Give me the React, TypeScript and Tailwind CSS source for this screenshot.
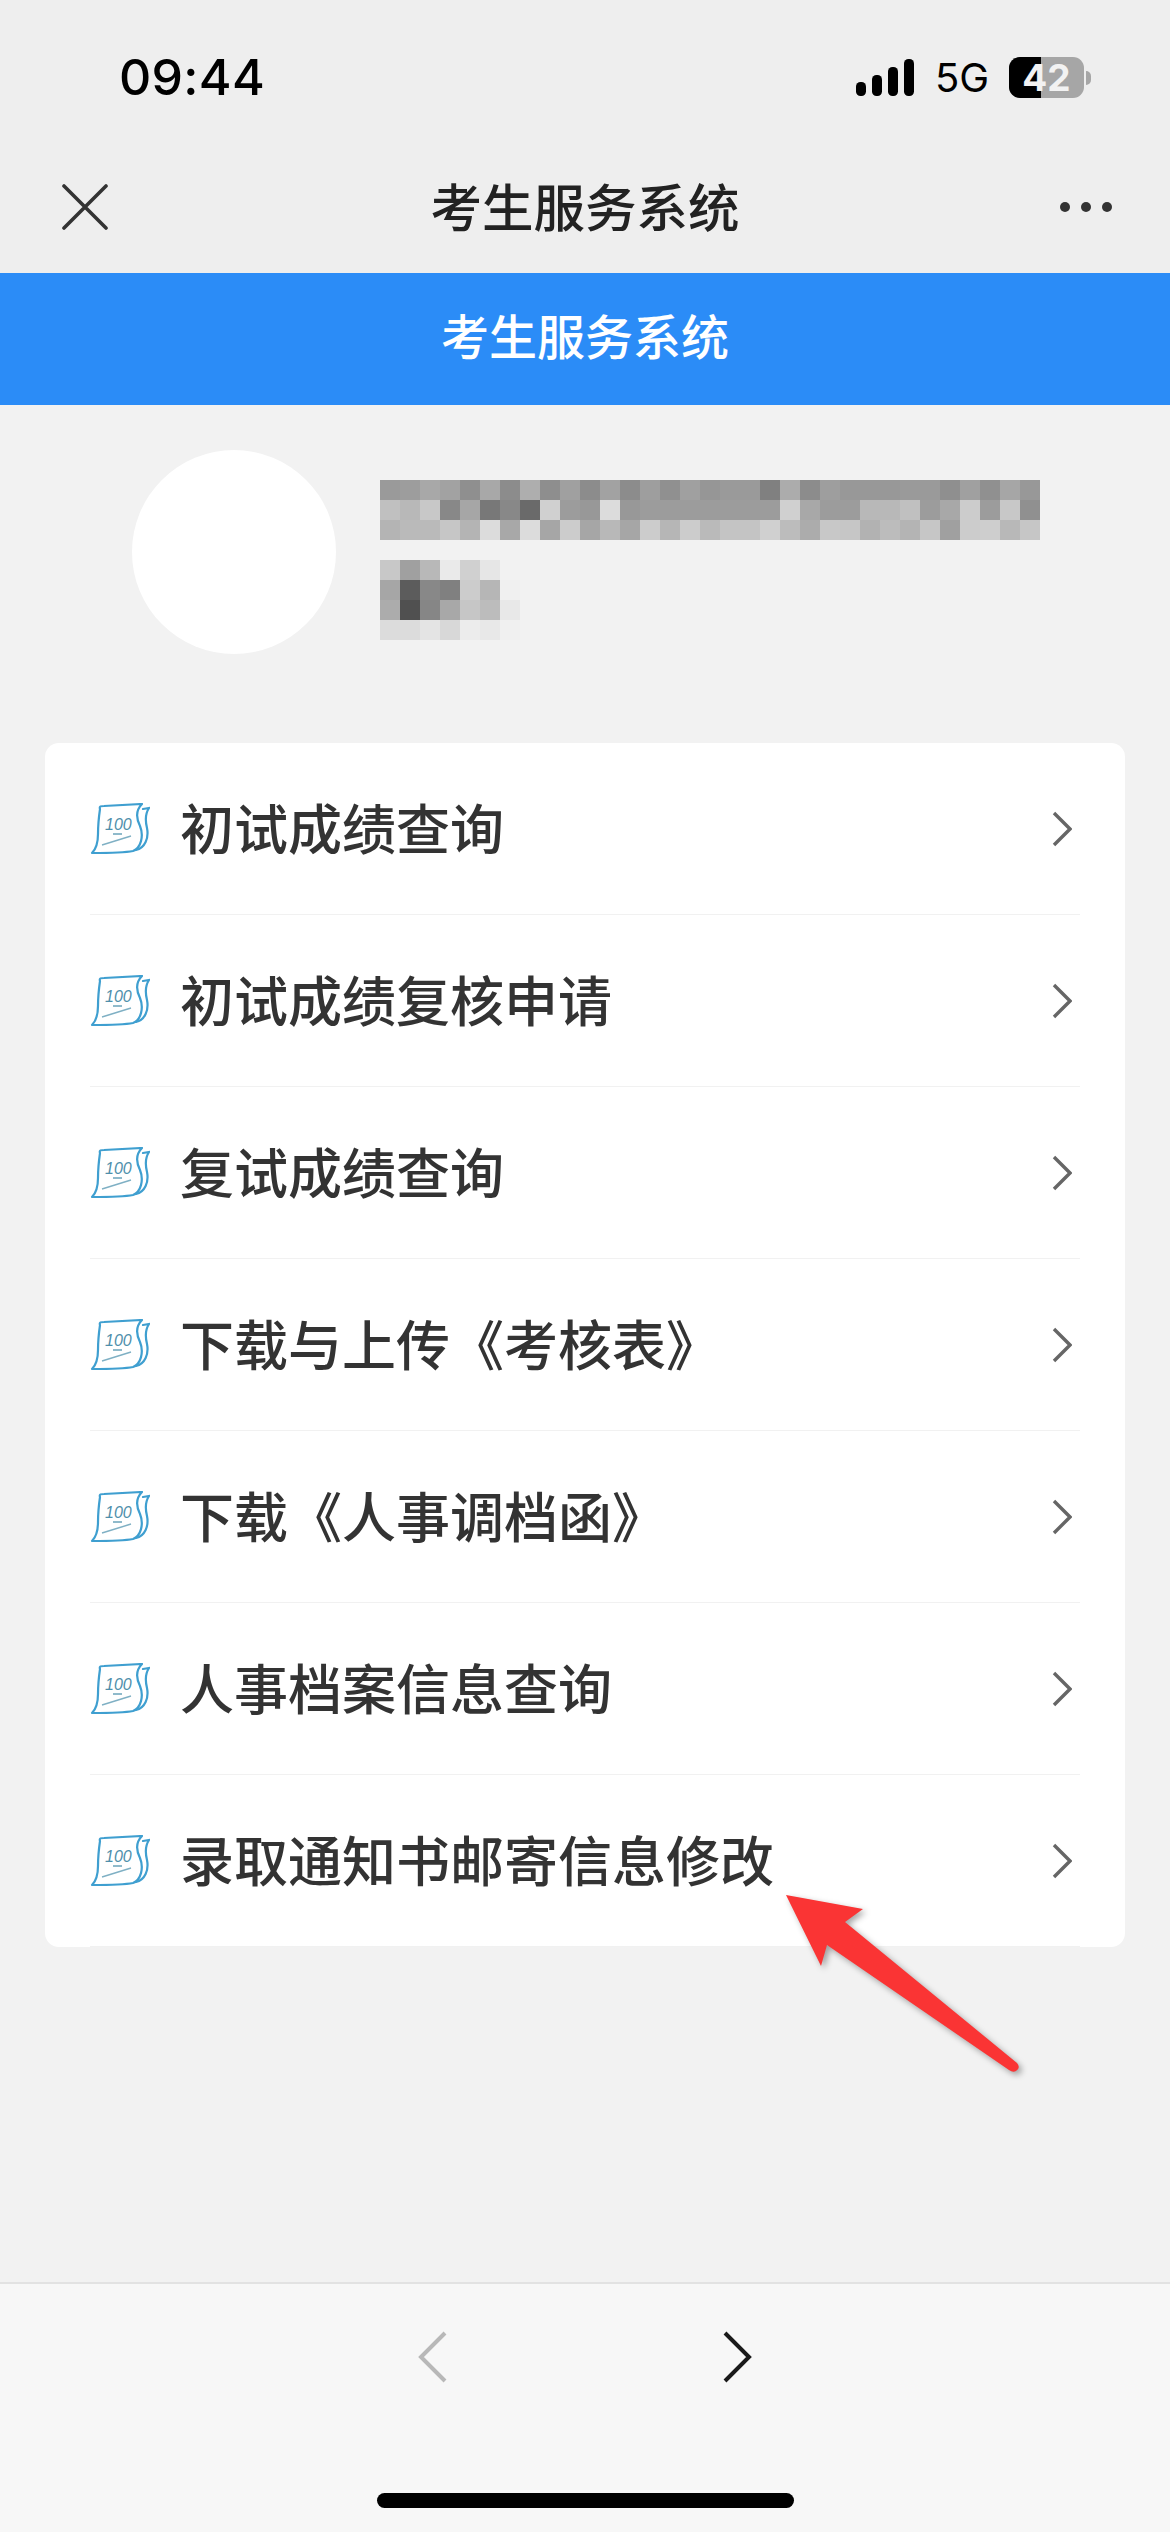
const menus = [
  '初试成绩查询',
  '初试成绩复核申请',
  '复试成绩查询',
  '下载与上传《考核表》',
  '下载《人事调档函》',
  '人事档案信息查询',
  '录取通知书邮寄信息修改',
]

const nameBlur = [
  ['9a', '9d', 'a8', 'a2', '8f', 'a8', '8c', 'ae', '8e', 'a0', '8c', 'a2', '8c', '9e', '90', 'a0', '96', '9a', '9a', '80', 'ac', '8c', '9e', '98', '98', '98', '9a', '9a', '8f', 'a0', '90', 'a6', '98'],
  ['c0', 'b8', 'c8', '88', 'a6', '78', '88', '6a', 'd0', '9c', '98', 'dc', '98', '9c', '9c', '9c', '9c', '9c', '9c', '9c', 'd0', 'a8', '9c', '9c', 'b8', 'b8', 'c0', '9c', 'a8', 'cc', '9c', 'c8', '90'],
  ['b4', 'ba', 'ba', 'c6', 'b4', 'dc', 'a8', 'dc', 'a6', 'cc', 'a6', 'b8', 'a6', 'cc', 'b6', 'cc', 'ba', 'c4', 'c4', 'd0', 'bc', 'ac', 'c8', 'c6', 'b2', 'bc', 'b4', 'c6', 'a0', 'cc', 'ce', 'b8', 'c6'],
]

const idBlur = [
  ['c8', 'a0', 'b8', 'ea', 'd0', 'e6', 'f2'],
  ['a6', '5c', '88', '80', 'cc', 'b6', 'f0'],
  ['ac', '50', '86', 'a8', 'c6', 'bc', 'e8'],
  ['dc', 'dc', 'e4', 'd8', 'ec', 'e8', 'f0'],
]

const Mosaic = ({ rows }: { rows: string[][] }) => (
  <div className="flex flex-col">
    {rows.map((row, i) => (
      <div key={i} className="flex h-5">
        {row.map((c, j) => (
          <div key={j} className="w-5 h-5" style={{ backgroundColor: `#${c}${c}${c}` }} />
        ))}
      </div>
    ))}
  </div>
)

const ScrollIcon = () => (
  <svg width="60" height="52" viewBox="-1 -1 60 52" fill="none" className="shrink-0">
    <path d="M9 5 C8 2 10 2 13 2 L51 0 C45 6 45 14 49 22 C53 32 50 44 42 47 C32 49 12 49 1 49 C6 44 7 38 7 30 C7 22 8 12 9 5 Z" stroke="#3f9fd0" strokeWidth="2.2" strokeLinejoin="round" />
    <path d="M52 5 L58 4 C54 10 54 16 56 24 C58 34 54 44 45 46" stroke="#3f9fd0" strokeWidth="2.2" strokeLinecap="round" />
    <text x="14" y="26" fontSize="16" fontStyle="italic" fill="#4f8fab" fontFamily="'Liberation Sans', sans-serif">100</text>
    <path d="M22 30 L31 30" stroke="#5f9cb5" strokeWidth="1.4" />
    <path d="M11 41 L40 32" stroke="#7fb0c4" strokeWidth="1.4" />
  </svg>
)

const App = () => {
  return (
    <div className="relative w-[1170px] h-[2532px] overflow-hidden flex flex-col bg-[#f2f2f2] font-['Noto_Sans_CJK_SC',sans-serif]">
      {/* status bar + wechat nav */}
      <div className="h-[273px] shrink-0 bg-[#eeeeee] flex flex-col">
        <div className="h-[152px] flex items-start justify-between pl-[119px] pr-[79px] pt-[46px]">
          <span className="font-['Inter',sans-serif] font-medium text-[50px] leading-[62px] text-black tracking-[0.3px]">09:44</span>
          <div className="flex items-center pt-[11px]">
            <svg width="58" height="37" viewBox="0 0 58 37" fill="black">
              <rect x="0" y="23" width="10" height="14" rx="4.5" />
              <rect x="16" y="16" width="10" height="21" rx="4.5" />
              <rect x="32" y="8" width="10" height="29" rx="4.5" />
              <rect x="48" y="0" width="10" height="37" rx="4.5" />
            </svg>
            <span className="ml-[21px] w-[52px] font-['Inter',sans-serif] text-[40px] leading-[40px] text-black">5G</span>
            <div className="ml-[22px] flex items-center gap-[2px]">
              <div className="relative w-[75px] h-[41px] rounded-[11px] bg-[#a6a6a6] flex items-center justify-center">
                <div className="absolute left-0 top-0 bottom-0 w-[32px] rounded-l-[11px] bg-black" />
                <span className="relative font-['Inter',sans-serif] font-bold text-[37px] leading-[37px] text-[#f2f2f2]">42</span>
              </div>
              <div className="w-[5px] h-[14px] rounded-r-full bg-[#a6a6a6]" />
            </div>
          </div>
        </div>
        <div className="relative flex-1 flex items-center justify-center pb-[16px]">
          <svg width="46" height="46" viewBox="0 0 46 46" className="absolute left-[62px] top-[32px]" stroke="#333333" strokeWidth="3.6" strokeLinecap="round">
            <path d="M2 2 L44 44 M44 2 L2 44" />
          </svg>
          <span className="text-[51.5px] leading-[60px] font-medium text-[#222222]">考生服务系统</span>
          <div className="absolute left-[1060px] top-[50px] flex gap-[11px]">
            <div className="w-[10px] h-[10px] rounded-full bg-[#333333]" />
            <div className="w-[10px] h-[10px] rounded-full bg-[#333333]" />
            <div className="w-[10px] h-[10px] rounded-full bg-[#333333]" />
          </div>
        </div>
      </div>

      <div className="h-[132px] shrink-0 bg-[#2b8cf7] flex items-center justify-center pb-[10px]">
        <span className="text-[48px] leading-[60px] font-medium text-white">考生服务系统</span>
      </div>

      {/* user info */}
      <div className="flex items-start pl-[132px] pt-[45px] h-[338px] shrink-0 gap-[44px]">
        <div className="w-[204px] h-[204px] rounded-full bg-white shrink-0" />
        <div className="flex flex-col gap-5 pt-[30px]">
          <Mosaic rows={nameBlur} />
          <Mosaic rows={idBlur} />
        </div>
      </div>

      {/* menu */}
      <div className="mx-[45px] bg-white rounded-[14px] shrink-0 flex flex-col">
        {menus.map((label) => (
          <div key={label} className="h-[172px] mx-[45px] flex items-center border-b border-[#f1f1f1] box-border">
            <ScrollIcon />
            <span className="ml-[30px] mb-[4px] flex-1 text-[54px] leading-[70px] font-medium text-[#333333]">{label}</span>
            <svg width="20" height="36" viewBox="0 0 20 36" fill="none" stroke="#666666" strokeWidth="3.4" className="mr-[8px]">
              <path d="M2 2 L18 18 L2 34" />
            </svg>
          </div>
        ))}
      </div>

      <div className="flex-1" />

      {/* bottom toolbar */}
      <div className="h-[250px] shrink-0 bg-[#f7f7f7] border-t-2 border-[#e2e2e2] flex flex-col items-center">
        <div className="flex items-start gap-[274px] pt-[47px] h-[209px]">
          <svg width="30" height="52" viewBox="0 0 30 52" fill="none" stroke="#b8b8b8" strokeWidth="4">
            <path d="M27 2 L3 26 L27 50" />
          </svg>
          <svg width="30" height="52" viewBox="0 0 30 52" fill="none" stroke="#1a1a1a" strokeWidth="4">
            <path d="M3 2 L27 26 L3 50" />
          </svg>
        </div>
        <div className="w-[417px] h-[15px] rounded-full bg-black" />
      </div>

      {/* red annotation arrow */}
      <svg className="absolute left-[770px] top-[1880px] drop-shadow-[3px_3px_3px_rgba(0,0,0,0.35)]" width="270" height="210" viewBox="770 1880 270 210">
        <path d="M786 1895 L863 1909 L845 1922 L1017 2063 Q1021 2068 1016 2071 Q1013 2073 1009 2070 L827 1945 L821 1966 Z" fill="#fa3434" />
      </svg>
    </div>
  )
}

export default App
